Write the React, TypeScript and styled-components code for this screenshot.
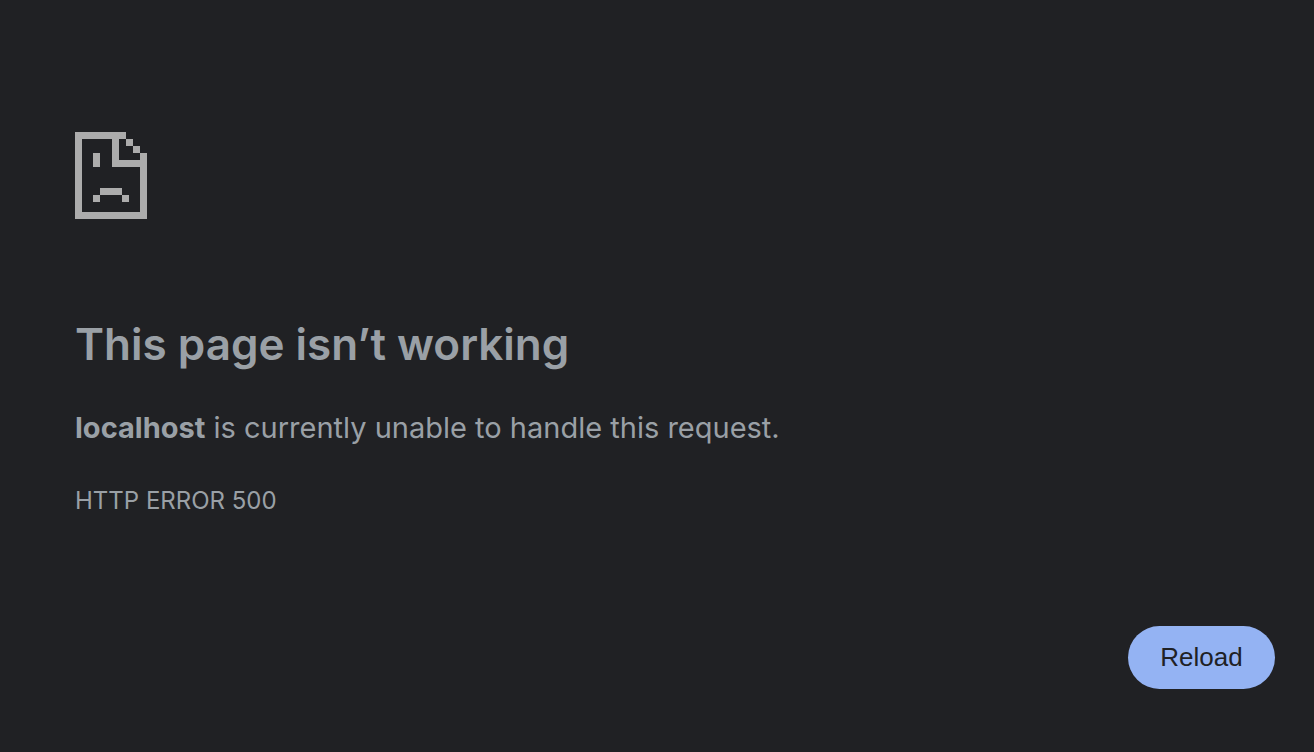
import React from "react";
import styled, { createGlobalStyle } from "styled-components";

const GlobalStyle = createGlobalStyle`
  * { box-sizing: border-box; }
  body {
    margin: 0;
    background: #202124;
    color: #9aa0a6;
    font-family: Inter, "Liberation Sans", sans-serif;
  }
`;

const Page = styled.main`
  display: flex;
  flex-direction: column;
  min-height: 100vh;
  padding: 132px 39px 63px 75px;
`;

const SadPage = styled.svg`
  display: block;
  width: 72px;
  height: 87px;
  fill: #acacac;
`;

const Title = styled.h1`
  margin: 96px 0 0;
  font-size: 44px;
  font-weight: 600;
  line-height: 58px;
`;

const Message = styled.p`
  margin: 32px 0 0;
  font-size: 29px;
  line-height: 46px;
`;

const ErrorCode = styled.div`
  margin-top: 32px;
  font-size: 24px;
  line-height: 36px;
`;

const Actions = styled.div`
  display: flex;
  justify-content: flex-end;
  margin-top: 107px;
`;

const ReloadButton = styled.button`
  min-width: 147px;
  padding: 16px 32px;
  border: 0;
  border-radius: 32px;
  background: #94b3f3;
  color: #202124;
  font-family: "Liberation Sans", Arial, sans-serif;
  font-size: 26px;
  line-height: 31px;
  cursor: pointer;
`;

export default function App() {
  return (
    <>
      <GlobalStyle />
      <Page>
        <SadPage viewBox="0 0 72 87" shapeRendering="crispEdges" aria-hidden="true">
          <path d="M0 0H51V7H44V28H65V21H72V87H0ZM7 7V80H65V35H37V7Z" fillRule="evenodd" />
          <path d="M51 7h7v7h-7zM58 14h7v7h-7zM18 21h7v14h-7zM25 56h22v7h-22zM18 63h7v7h-7zM47 63h7v7h-7z" />
        </SadPage>
        <Title>This page isn’t working</Title>
        <Message>
          <strong>localhost</strong> is currently unable to handle this request.
        </Message>
        <ErrorCode>HTTP ERROR 500</ErrorCode>
        <Actions>
          <ReloadButton type="button" onClick={() => window.location.reload()}>
            Reload
          </ReloadButton>
        </Actions>
      </Page>
    </>
  );
}
